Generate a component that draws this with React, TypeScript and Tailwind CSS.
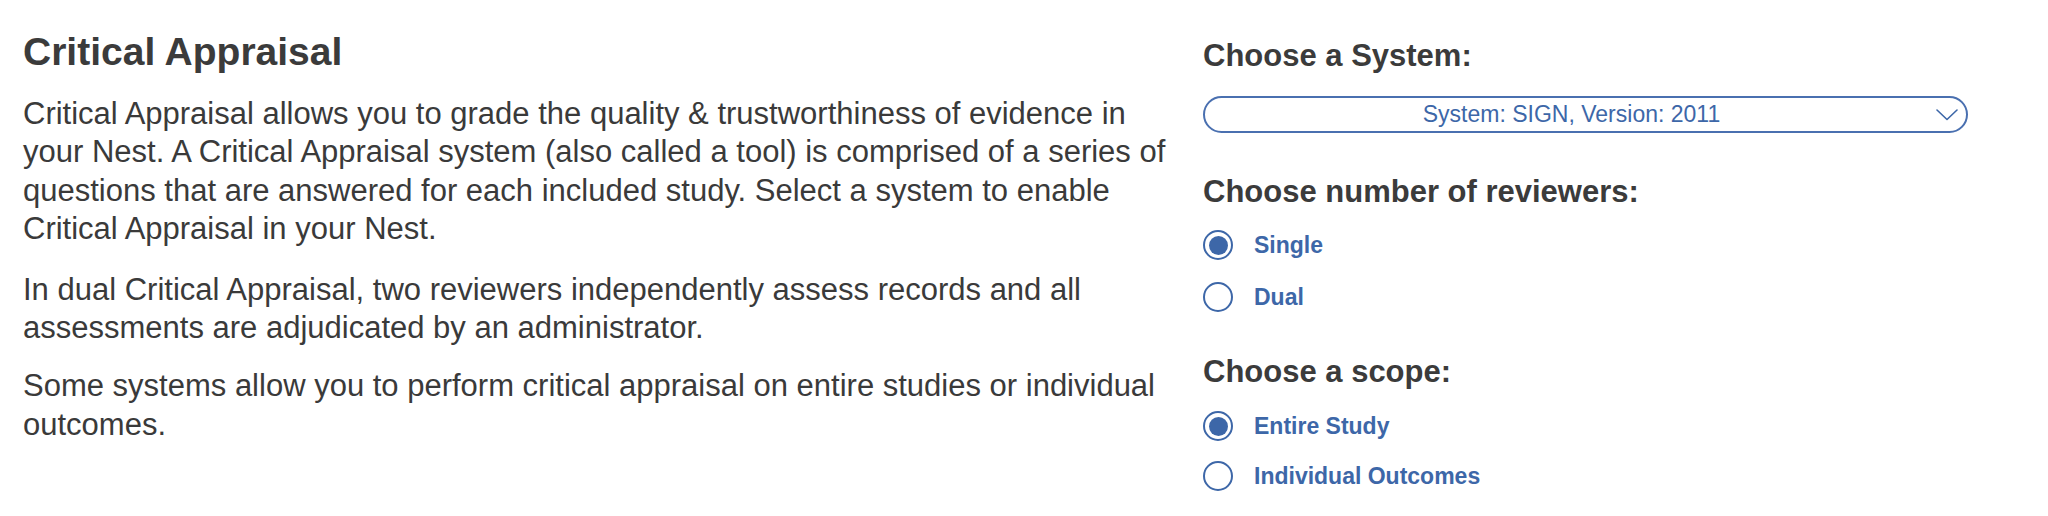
import React from "react";

const Radio = ({ checked, label }: { checked: boolean; label: string }) => (
  <label className="flex items-center h-[30px] cursor-pointer">
    <span className="w-[30px] h-[30px] rounded-full border-2 border-[#3d67a8] flex items-center justify-center shrink-0">
      {checked && <span className="w-[19px] h-[19px] rounded-full bg-[#3d67a8]" />}
    </span>
    <span className="ml-[21px] text-[23px] leading-[30px] font-bold text-[#3d67a8]">{label}</span>
  </label>
);

export default function App() {
  return (
    <div
      className="w-[2048px] h-[516px] bg-white flex px-[23px] gap-[30px] text-[#3a3a3a]"
      style={{ fontFamily: '"Liberation Sans", Arial, Helvetica, sans-serif' }}
    >
      <div className="w-[1150px] pt-[30px]">
        <h1 className="text-[39px] leading-[44px] font-bold text-[#3b3b3b]">Critical Appraisal</h1>
        <p className="mt-[21px] text-[31px] leading-[38.4px]">
          Critical Appraisal allows you to grade the quality &amp; trustworthiness of evidence in your Nest. A
          Critical Appraisal system (also called a tool) is comprised of a series of questions that are answered
          for each included study. Select a system to enable Critical Appraisal in your Nest.
        </p>
        <p className="mt-[22px] text-[31px] leading-[38.4px]">
          In dual Critical Appraisal, two reviewers independently assess records and all assessments are
          adjudicated by an administrator.
        </p>
        <p className="mt-[20px] text-[31px] leading-[38.4px]">
          Some systems allow you to perform critical appraisal on entire studies or individual outcomes.
        </p>
      </div>
      <div className="w-[765px] pt-[38px] flex flex-col">
        <h2 className="text-[31px] leading-[36px] font-bold text-[#3b3b3b]">Choose a System:</h2>
        <div className="mt-[22px] h-[37px] rounded-full border-2 border-[#4a70b0] flex items-center relative">
          <span className="flex-1 text-center text-[23px] text-[#3d67a8] pr-[28px]">System: SIGN, Version: 2011</span>
          <svg className="absolute right-[8px] top-1/2 -translate-y-1/2" width="22" height="12" viewBox="0 0 22 12" fill="none">
            <path d="M1 1 L11 10.5 L21 1" stroke="#3d67a8" strokeWidth="1.6" strokeLinecap="round" strokeLinejoin="round" />
          </svg>
        </div>
        <h2 className="mt-[41px] text-[31px] leading-[36px] font-bold text-[#3b3b3b]">Choose number of reviewers:</h2>
        <div className="mt-[20px] flex flex-col gap-[22px]">
          <Radio checked label="Single" />
          <Radio checked={false} label="Dual" />
        </div>
        <h2 className="mt-[42px] text-[31px] leading-[36px] font-bold text-[#3b3b3b]">Choose a scope:</h2>
        <div className="mt-[21px] flex flex-col gap-[20px]">
          <Radio checked label="Entire Study" />
          <Radio checked={false} label="Individual Outcomes" />
        </div>
      </div>
    </div>
  );
}
